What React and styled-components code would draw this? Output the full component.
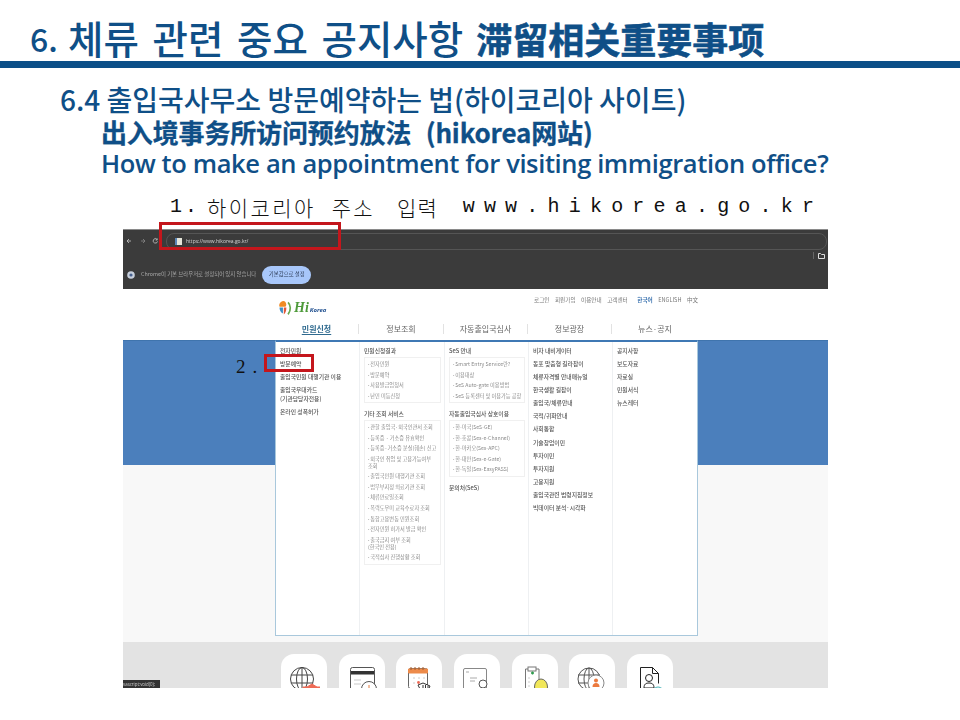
import React from "react";
import styled, { createGlobalStyle } from "styled-components";

const Global = createGlobalStyle`
  html, body { margin: 0; padding: 0; background: #fff; }
  body { width: 960px; height: 720px; overflow: hidden; font-family: "Noto Sans CJK KR", "Noto Sans", sans-serif; }
`;

const BLUE = "#0f4f87";
const KR = `"Noto Sans CJK KR", sans-serif`;
const SC = `"Noto Sans CJK SC", sans-serif`;

const Slide = styled.div`
  width: 960px;
  height: 720px;
  display: flex;
  flex-direction: column;
`;

const Title = styled.h1`
  margin: 0;
  height: 61px;
  padding: 14px 0 0 30px;
  box-sizing: border-box;
  display: flex;
  align-items: center;
  font: 500 38.5px/1 ${KR};
  word-spacing: 5px;
  color: ${BLUE};
  white-space: pre;
`;

const TitleNum = styled.span`
  width: 38px;
  font-size: 32px;
`;

const TitleZh = styled.span`
  margin-left: 13px;
  font: 700 36px/1 ${SC};
  -webkit-text-stroke: 0.6px ${BLUE};
`;

const Rule = styled.div`
  height: 7px;
  background: #0b4f88;
`;

const Sub = styled.div`
  padding: 14px 0 0 60px;
  color: ${BLUE};
  display: flex;
  flex-direction: column;
`;

const SubKo = styled.div`
  height: 34px;
  font: 500 28px/34px ${KR};
  white-space: pre;
`;

const SubZh = styled.div`
  margin-left: 41px;
  height: 31px;
  font: 700 26px/31px ${SC};
  letter-spacing: -0.15px;
  word-spacing: 1.5px;
  -webkit-text-stroke: 0.3px ${BLUE};
  white-space: pre;
`;

const SubEn = styled.div`
  margin-left: 41px;
  height: 33px;
  font: 600 25.5px/33px "Open Sans", sans-serif;
  letter-spacing: -0.38px;
  white-space: pre;
`;

const Caption = styled.div`
  height: 36px;
  margin: 13px 0 0 170px;
  display: flex;
  align-items: flex-start;
  color: #111;
  font: 300 21px/28px ${KR};
  white-space: pre;
`;

const CapPart = styled.span`
  margin-left: ${p => p.$gap || 0}px;
  letter-spacing: ${p => p.$track || 0}px;
`;

const CapMono = styled(CapPart)`
  font: 400 20px/28px "Liberation Mono", monospace;
`;

const Shot = styled.div`
  position: relative;
  margin-left: 123px;
  width: 705px;
  height: 459px;
  display: flex;
  flex-direction: column;
  overflow: visible;
`;

const Blurred = styled.div`
  width: 100%;
  height: 100%;
  display: flex;
  flex-direction: column;
  overflow: hidden;
  filter: blur(0.35px);
`;

const Browser = styled.div`
  height: 60px;
  flex: none;
  background: #3b3b3b;
  border-top: 1px solid #8a8a8a;
  box-sizing: border-box;
  display: flex;
  flex-direction: column;
`;

const Toolbar = styled.div`
  height: 18px;
  padding: 2px 1px 0 3px;
  display: flex;
  align-items: center;
  gap: 2px;
  color: #c8c8c8;
`;

const UrlField = styled.div`
  flex: 1;
  height: 15px;
  padding-left: 8px;
  border: 1px solid #555;
  border-radius: 8px;
  display: flex;
  align-items: center;
  gap: 4px;
  font: 5px/1 "Open Sans", sans-serif;
  color: #d6d6d6;
`;

const Favicon = styled.span`
  width: 7px;
  height: 7px;
  background: #e6e6da;
  border-left: 2px solid #5b86b8;
  box-sizing: border-box;
`;

const Bookmarks = styled.div`
  height: 11px;
  display: flex;
  justify-content: flex-end;
  align-items: center;
  padding-right: 3px;
  gap: 4px;
`;

const BarTick = styled.span`
  width: 1px;
  height: 7px;
  background: #666;
`;

const Infobar = styled.div`
  flex: 1;
  padding: 0 0 0 4px;
  display: flex;
  align-items: center;
  font: 400 5.4px/1 ${KR};
  color: #a8a8a8;
  white-space: pre;
`;

const SetDefault = styled.span`
  margin-left: 6px;
  width: 49px;
  height: 18px;
  border-radius: 9px;
  background: #a8c7fa;
  color: #2b3a55;
  display: flex;
  align-items: center;
  justify-content: center;
`;

const SiteHead = styled.div`
  height: 51px;
  flex: none;
  background: #fff;
  display: flex;
  flex-direction: column;
`;

const TopRow = styled.div`
  height: 26px;
  display: flex;
  align-items: flex-start;
  padding: 6px 0 0 154px;
`;

const Logo = styled.div`
  width: 257px;
  margin-top: 4px;
  display: flex;
  align-items: center;
  gap: 0;
`;

const LogoHi = styled.span`
  font: italic 700 14px/1 "Liberation Serif", serif;
  color: #4e9a3a;
`;

const LogoWord = styled.span`
  margin: 3px 0 0 1px;
  font: italic 700 6px/1 "Open Sans", sans-serif;
  color: #1f4f8f;
`;

const TopLinks = styled.div`
  display: flex;
  gap: 5.5px;
  font: 400 5.6px/10px ${KR};
  color: #777;
  white-space: pre;
`;

const TopLink = styled.span`
  color: ${p => (p.$on ? "#3d74b0" : "#777")};
  font-weight: ${p => (p.$on ? 700 : 400)};
  margin-left: ${p => p.$gap || 0}px;
`;

const Nav = styled.div`
  margin-left: 152px;
  width: 423px;
  display: grid;
  grid-template-columns: 84px 85px 84px 84px 86px;
`;

const NavItem = styled.div`
  height: 10px;
  margin-top: 3px;
  text-align: center;
  font: ${p => (p.$on ? 700 : 400)} 8px/10px ${KR};
  color: ${p => (p.$on ? "#2f6a8f" : "#666")};
  border-right: ${p => (p.$last ? "none" : "1px solid #e2e2e2")};
`;

const NavLabel = styled.span`
  text-decoration: ${p => (p.$on ? "underline" : "none")};
  text-underline-offset: 2px;
`;

const Hero = styled.div`
  height: 125px;
  flex: none;
  background: #4b7fbc;
  border-top: 1px solid #3f74ad;
  box-sizing: border-box;
`;

const Light = styled.div`
  height: 177px;
  flex: none;
  background: #f8f8f8;
`;

const Band = styled.div`
  height: 46px;
  flex: none;
  box-sizing: border-box;
  position: relative;
  overflow: hidden;
  background: #e3e3e3;
  display: flex;
  align-items: flex-start;
  padding: 12px 0 0 158px;
  gap: 11.7px;
`;

const IconCard = styled.div`
  width: 46px;
  height: 34px;
  flex: none;
  background: #fff;
  border-radius: 13px 13px 0 0;
  display: flex;
  justify-content: center;
  padding-top: 12px;
  box-sizing: border-box;
  overflow: hidden;
`;

const Status = styled.div`
  position: absolute;
  left: 0;
  bottom: 0;
  width: 37px;
  height: 8px;
  background: #333;
  color: #cfcfcf;
  font: 4.4px/8px "Open Sans", sans-serif;
  white-space: pre;
`;

const Panel = styled.div`
  position: absolute;
  left: 152px;
  top: 111px;
  width: 423px;
  height: 296px;
  box-sizing: border-box;
  background: #fff;
  border: 1px solid #a9c8dc;
  border-top: 2px solid #3f78b4;
  display: grid;
  grid-template-columns: 84px 85px 84px 84px 1fr;
`;

const Col = styled.div`
  padding: ${p => p.$top ?? 2}px 3px 0 4px;
  border-right: ${p => (p.$last ? "none" : "1px solid #eef0f2")};
  display: flex;
  flex-direction: column;
  min-width: 0;
`;

const Head = styled.div`
  flex: none;
  height: 13.08px;
  font: 500 5.8px/13.08px ${KR};
  color: #555;
  white-space: pre;
`;

const Lead = styled.div`
  font: 500 5.8px/9px ${KR};
  color: #555;
  margin-bottom: 4px;
  white-space: pre;
`;

const Group = styled.ul`
  list-style: none;
  margin: 0 0 3.5px;
  padding: 1px 2px 1px 3px;
  border: 1px solid #f0f0f0;
  display: flex;
  flex-direction: column;
`;

const Item = styled.li`
  min-height: 10.6px;
  font: 400 5.2px/10.6px ${KR};
  color: #8b8b8b;
  white-space: pre;
  &::before { content: "• "; color: #aaa; font-size: 4px; }
`;

const ItemWrap = styled(Item)`
  line-height: 5.6px;
  padding: 2.6px 0;
`;

const RedBox = styled.div`
  position: absolute;
  left: ${p => p.$x}px;
  top: ${p => p.$y}px;
  width: ${p => p.$w}px;
  height: ${p => p.$h}px;
  box-sizing: border-box;
  border: 3px solid #c4161c;
`;

const StepLabel = styled.div`
  position: absolute;
  left: 113px;
  top: 127px;
  font: 400 19px/22px "Liberation Serif", serif;
  letter-spacing: 7px;
  color: #111;
`;

const Arrows = () => (
  <svg width="38" height="10" viewBox="0 0 38 10" fill="none" stroke="#c8c8c8" strokeWidth="0.8">
    <path d="M5 5H1M3 3L1 5l2 2" />
    <path d="M15 5h4M17 3l2 2-2 2" stroke="#888" />
    <path d="M31 3.400a2.200 2.200 0 1 0 .5 2M31.200 2.400v1.600h-1.600" />
  </svg>
);

const Folder = () => (
  <svg width="7" height="6" viewBox="0 0 7 6" fill="none" stroke="#ddd" strokeWidth="1">
    <path d="M.5.5h2l1 1h3v4h-6z" />
  </svg>
);

const ChromeMark = () => (
  <svg width="8" height="8" viewBox="0 0 8 8" style={{ marginRight: 6 }}>
    <circle cx="4" cy="4" r="3.800" fill="#c7cfdc" />
    <circle cx="4" cy="4" r="1.600" fill="#47618f" />
  </svg>
);

const LogoMark = () => (
  <svg width="17" height="18" viewBox="0 0 20 19">
    <path d="M5 2c3-2 6 0 6 4l-1 2H3c-1-2 0-5 2-6z" fill="#f08a24" />
    <path d="M3 9h4v7c-3-1-4-4-4-7z" fill="#3f8fc6" />
    <path d="M8 9h3c0 4-1 7-3 8z" fill="#e2563a" />
    <path d="M13 3c3 3 4 9 0 14" fill="none" stroke="#6aa84f" strokeWidth="2" />
  </svg>
);

const icons = [
  <svg width="32" height="32" viewBox="0 0 32 32" fill="none" stroke="#444" strokeWidth="1">
    <circle cx="14" cy="13" r="11.500" />
    <ellipse cx="14" cy="13" rx="5.500" ry="11.500" />
    <path d="M14 1.500v23M3 9h22M3 17h22" />
    <path d="M15 21h4l5-3 5 3h3v11H15z" fill="#ee6a55" stroke="#ee6a55" />
  </svg>,
  <svg width="32" height="32" viewBox="0 0 32 32" fill="none" stroke="#555" strokeWidth="1">
    <rect x="4.500" y="1.500" width="24" height="24" rx="2" />
    <rect x="5" y="5" width="23" height="3.500" fill="#333" stroke="none" />
    <path d="M8 14h7M8 18h7" stroke="#c9c9c9" />
    <circle cx="23" cy="23" r="7.500" fill="#fff" />
    <path d="M23 19v5" stroke="#e27a3f" />
  </svg>,
  <svg width="32" height="32" viewBox="0 0 32 32" fill="none" stroke="#666" strokeWidth="1">
    <rect x="5.500" y="2.500" width="19" height="20" rx="2" />
    <path d="M5.500 3h19v4h-19z" fill="#ed8b4b" stroke="#ed8b4b" />
    <path d="M8 1v3M12 1v3M16 1v3M20 1v3" stroke="#a65a28" />
    <path d="M10 12h2M15 12h2M20 12h2M10 17h2" stroke="#ccc" />
    <circle cx="15.500" cy="16.500" r="1.400" fill="#ee6a55" stroke="none" />
    <path d="M15 19l5-2 7 3-3 7-6-2z" fill="#fff" stroke="#333" />
    <path d="M20 19v3M22.500 19v3M25 20v3" stroke="#333" />
  </svg>,
  <svg width="32" height="32" viewBox="0 0 32 32" fill="none" stroke="#888" strokeWidth="1">
    <rect x="2.500" y="2.500" width="23" height="22" rx="1.500" />
    <path d="M5 6h3M9 12h7M9 15h5" stroke="#aaa" />
    <circle cx="22" cy="18" r="4" fill="#fff" stroke="#555" />
    <path d="M22 22v3c-3 .5-5 1.500-5 3h10c0-1.500-2-2.500-5-3" fill="#2f7d5b" stroke="#2f7d5b" />
  </svg>,
  <svg width="32" height="32" viewBox="0 0 32 32" fill="none" stroke="#777" strokeWidth="1">
    <path d="M9 3H6.500v24H20V3h-3" />
    <rect x="9" y="1" width="8" height="4" fill="#fff" />
    <path d="M12 7h3M13.500 5.500v3" stroke="#2f9a4e" strokeWidth="1.400" />
    <path d="M9 12h2M9 16h2M9 20h2" stroke="#ccc" />
    <ellipse cx="22" cy="21" rx="6.500" ry="8" fill="#f1e75a" stroke="#666" />
  </svg>,
  <svg width="32" height="32" viewBox="0 0 32 32" fill="none" stroke="#555" strokeWidth="1">
    <circle cx="13" cy="13" r="11" />
    <ellipse cx="13" cy="13" rx="5" ry="11" />
    <path d="M2 9h22M2 17h22M13 2v22" />
    <circle cx="20" cy="17" r="8" fill="#fff" stroke="#888" />
    <circle cx="20" cy="14.500" r="2" fill="#ec7a3e" stroke="none" />
    <path d="M16.500 21c0-3 1.500-4 3.500-4s3.500 1 3.500 4z" fill="#ec7a3e" stroke="none" />
  </svg>,
  <svg width="32" height="32" viewBox="0 0 32 32" fill="none" stroke="#222" strokeWidth="1">
    <path d="M6.500 1.500h12l6 6v10M6.500 1.500v25" />
    <path d="M18.500 1.500v6h6" />
    <circle cx="15" cy="12" r="3.500" />
    <path d="M10 22c0-4 2-5 5-5s5 1 5 5z" />
    <path d="M9 27h1M12 27h1M15 27h1" />
    <circle cx="24" cy="27" r="6" stroke="#49b3b8" />
  </svg>
];

const col2a = ["전자민원", "방문예약", "사용발급업청서", "난민 미등신청"];
const col3a = ["Smart Entry Service란?", "이용대상", "SeS Auto-gate 이용방법", "SeS 등록센터 및 이용가능 공항"];
const col3b = ["한-미국(SeS-GE)", "한-홍콩(Ses-e-Channel)", "한-마카오(Ses-APC)", "한-대만(Ses-e-Gate)", "한-독일(Ses-EasyPASS)"];
const col4 = ["비자 내비게이터", "동포 맞춤형 길라잡이", "체류자격별 안내매뉴얼", "한국생활 길잡이", "출입국/체류안내", "국적/귀화안내", "사회통합", "기술창업이민", "투자이민", "투자지원", "고용지원", "출입국관련 법령지침정보", "빅데이터 분석·시각화"];
const col5 = ["공지사항", "보도자료", "자료실", "민원서식", "뉴스레터"];

const App = () => (
  <Slide>
    <Global />
    <Title>
      <TitleNum>6.</TitleNum>체류 관련 중요 공지사항
      <TitleZh>滞留相关重要事项</TitleZh>
    </Title>
    <Rule />
    <Sub>
      <SubKo>6.4 출입국사무소 방문예약하는 법(하이코리아 사이트)</SubKo>
      <SubZh>出入境事务所访问预约放法  (hikorea网站)</SubZh>
      <SubEn>How to make an appointment for visiting immigration office?</SubEn>
    </Sub>
    <Caption>
      <CapMono $track={3}>1.</CapMono>
      <CapPart $gap={7} $track={2.4}>하이코리아</CapPart>
      <CapPart $gap={16} $track={2.4}>주소</CapPart>
      <CapPart $gap={22} $track={1}>입력</CapPart>
      <CapMono $gap={25} $track={9.2}>www.hikorea.go.kr</CapMono>
    </Caption>
    <Shot>
      <Blurred>
        <Browser>
          <Toolbar>
            <Arrows />
            <UrlField>
              <Favicon />
              https://www.hikorea.go.kr/
            </UrlField>
          </Toolbar>
          <Bookmarks>
            <BarTick />
            <Folder />
          </Bookmarks>
          <Infobar>
            <ChromeMark />
            Chrome이 기본 브라우저로 설정되어 있지 않습니다
            <SetDefault>기본값으로 설정</SetDefault>
          </Infobar>
        </Browser>
        <SiteHead>
          <TopRow>
            <Logo>
              <LogoMark />
              <LogoHi>Hi</LogoHi>
              <LogoWord>Korea</LogoWord>
            </Logo>
            <TopLinks>
              <TopLink>로그인</TopLink>
              <TopLink>회원가입</TopLink>
              <TopLink>이용안내</TopLink>
              <TopLink>고객센터</TopLink>
              <TopLink $on $gap={4}>한국어</TopLink>
              <TopLink>ENGLISH</TopLink>
              <TopLink>中文</TopLink>
            </TopLinks>
          </TopRow>
          <Nav>
            <NavItem $on><NavLabel $on>민원신청</NavLabel></NavItem>
            <NavItem>정보조회</NavItem>
            <NavItem>자동출입국심사</NavItem>
            <NavItem>정보광장</NavItem>
            <NavItem $last>뉴스·공지</NavItem>
          </Nav>
        </SiteHead>
        <Hero />
        <Light />
        <Band>
          {icons.map((icon, i) => (
            <IconCard key={i}>{icon}</IconCard>
          ))}
          <Status>vascript:void(0);</Status>
        </Band>
        <Panel>
          <Col $top={4}>
            <Lead>전자민원</Lead>
            <Lead>방문예약</Lead>
            <Lead>출입국민원 대행기관 이용</Lead>
            <Lead>{"출입국우대카드\n(기관담당자전용)"}</Lead>
            <Lead>온라인 성폭허가</Lead>
          </Col>
          <Col>
            <Head>민원신청결과</Head>
            <Group>
              {col2a.map(t => <Item key={t}>{t}</Item>)}
            </Group>
            <Head>기타 조회 서비스</Head>
            <Group>
              <Item>관할 출입국·외국인관서 조회</Item>
              <Item>등록증 · 거소증 유효확인</Item>
              <Item>등록증·거소증 분실(훼손) 신고</Item>
              <ItemWrap>{"외국인 취업 및 고용가능여부\n조회"}</ItemWrap>
              <Item>출입국민원 대행기관 조회</Item>
              <Item>법무부지정 의료기관 조회</Item>
              <Item>체류만료일조회</Item>
              <Item>폭력도우미 교육수료자 조회</Item>
              <Item>통합고용변동 민원조회</Item>
              <Item>전자민원 허가서 발급 확인</Item>
              <ItemWrap>{"출국금지 여부 조회\n(한국인 전용)"}</ItemWrap>
              <Item>국적심사 진행상황 조회</Item>
            </Group>
          </Col>
          <Col>
            <Head>SeS 안내</Head>
            <Group>
              {col3a.map(t => <Item key={t}>{t}</Item>)}
            </Group>
            <Head>자동출입국심사 상호이용</Head>
            <Group>
              {col3b.map(t => <Item key={t}>{t}</Item>)}
            </Group>
            <Head>문의처(SeS)</Head>
          </Col>
          <Col>
            {col4.map(t => <Head key={t}>{t}</Head>)}
          </Col>
          <Col $last>
            {col5.map(t => <Head key={t}>{t}</Head>)}
          </Col>
        </Panel>
      </Blurred>
      <RedBox $x={36} $y={-7} $w={182} $h={28} />
      <RedBox $x={141} $y={125} $w={50} $h={18} />
      <StepLabel>2.</StepLabel>
    </Shot>
  </Slide>
);

export default App;
